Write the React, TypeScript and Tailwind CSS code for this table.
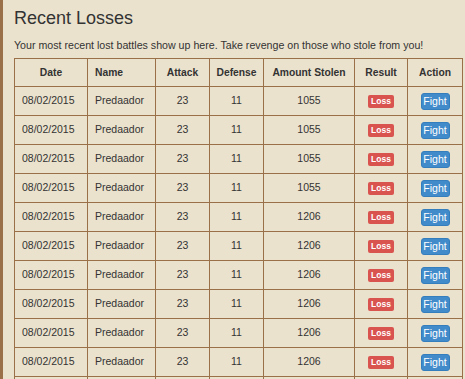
import React from "react";

const rows = [
  "1055", "1055", "1055", "1055", "1206", "1206", "1206", "1206", "1206", "1206", "1206", "1206",
];

export default function App() {
  return (
    <div
      className="w-[465px] h-[379px] overflow-hidden bg-[#ebe2cd] border-l-[3px] border-[#9a7048] text-[#333333]"
      style={{ fontFamily: '"Liberation Sans", Arial, sans-serif' }}
    >
      <div className="pl-[11px] pt-[8px]">
        <h3 className="text-[18px] leading-[20px] text-[#333333]">Recent Losses</h3>
        <p className="text-[10.65px] leading-[16px] mt-[9px] whitespace-nowrap">
          Your most recent lost battles show up here. Take revenge on those who stole from you!
        </p>
        <table className="mt-[5px] w-[448px] border-collapse border border-[#9a7048] text-[10.5px] table-fixed">
          <colgroup>
            <col className="w-[73px]" />
            <col className="w-[68px]" />
            <col className="w-[54px]" />
            <col className="w-[54px]" />
            <col className="w-[91px]" />
            <col className="w-[53px]" />
            <col className="w-[55px]" />
          </colgroup>
          <thead>
            <tr className="h-[28px] text-[10.3px]">
              <th className="border border-[#9a7048] font-bold text-center">Date</th>
              <th className="border border-[#9a7048] font-bold text-left pl-[7px]">Name</th>
              <th className="border border-[#9a7048] font-bold text-center">Attack</th>
              <th className="border border-[#9a7048] font-bold text-center">Defense</th>
              <th className="border border-[#9a7048] font-bold text-center">Amount Stolen</th>
              <th className="border border-[#9a7048] font-bold text-center">Result</th>
              <th className="border border-[#9a7048] font-bold text-center">Action</th>
            </tr>
          </thead>
          <tbody>
            {rows.map((amt, i) => (
              <tr key={i} className="h-[29px]">
                <td className="border border-[#9a7048] pl-[7px]">08/02/2015</td>
                <td className="border border-[#9a7048] pl-[7px]">Predaador</td>
                <td className="border border-[#9a7048] text-center">23</td>
                <td className="border border-[#9a7048] text-center">11</td>
                <td className="border border-[#9a7048] text-center">{amt}</td>
                <td className="border border-[#9a7048] text-center">
                  <span className="inline-block bg-[#d9534f] text-white font-bold text-[8.5px] leading-[13px] w-[26px] rounded-[2px] align-middle">
                    Loss
                  </span>
                </td>
                <td className="border border-[#9a7048] text-center">
                  <span className="inline-block bg-[#428bca] border border-[#357ebd] text-white text-[10.5px] leading-[15px] w-[29px] rounded-[3px] align-middle">
                    Fight
                  </span>
                </td>
              </tr>
            ))}
          </tbody>
        </table>
      </div>
    </div>
  );
}
